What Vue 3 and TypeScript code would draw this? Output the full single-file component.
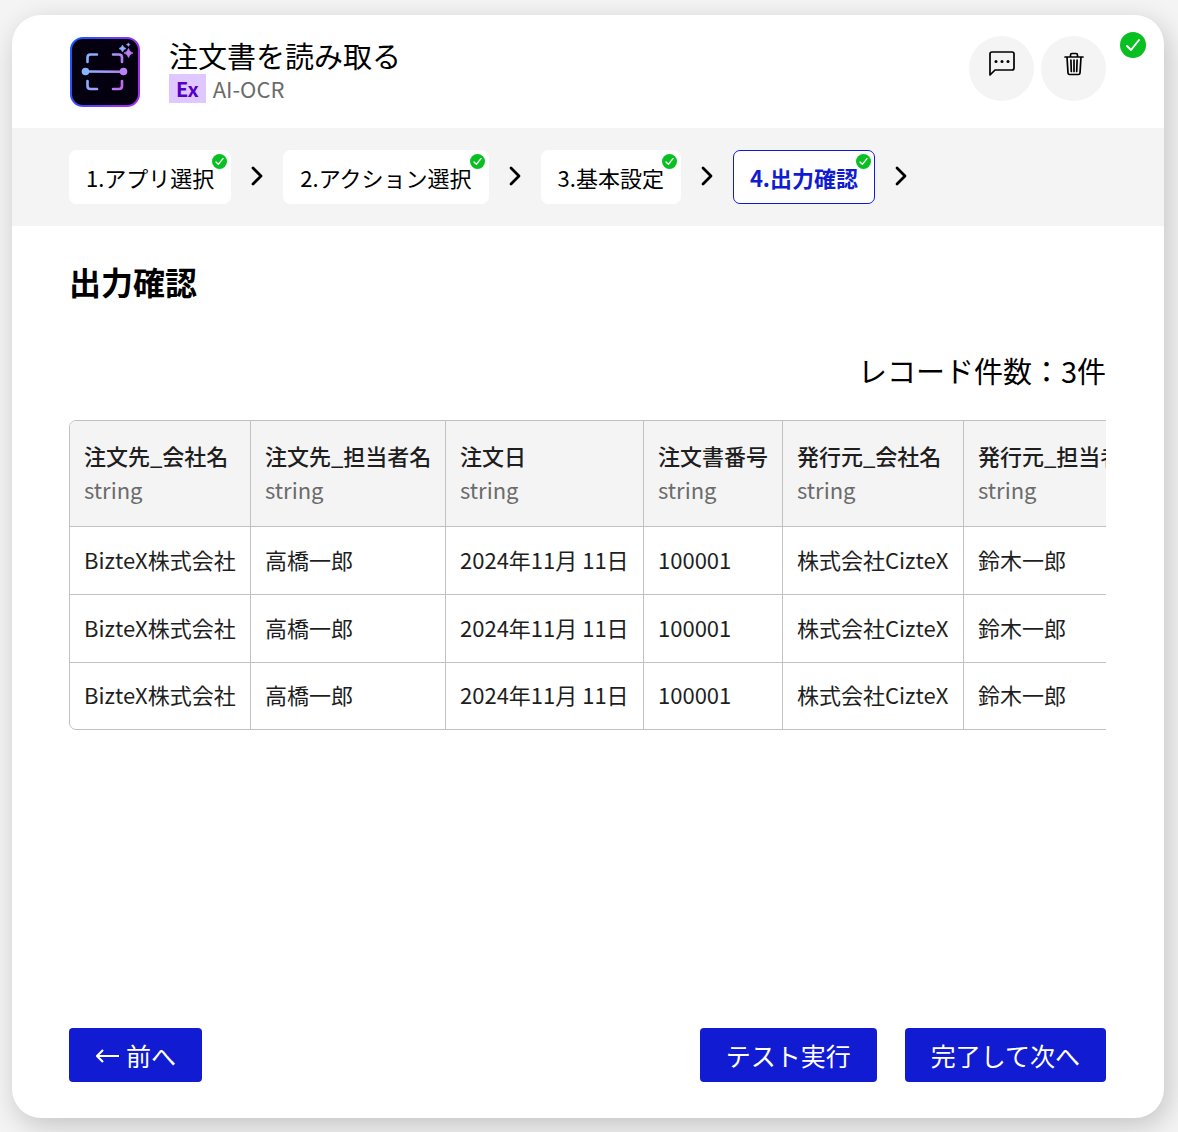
<script setup lang="ts">
interface Step {
  label: string
  current?: boolean
}

interface Column {
  key: keyof OrderRow
  label: string
  type: string
}

interface OrderRow {
  customer: string
  contact: string
  date: string
  number: string
  issuer: string
  issuerContact: string
}

const steps: Step[] = [
  { label: '1.アプリ選択' },
  { label: '2.アクション選択' },
  { label: '3.基本設定' },
  { label: '4.出力確認', current: true },
]

const columns: Column[] = [
  { key: 'customer', label: '注文先_会社名', type: 'string' },
  { key: 'contact', label: '注文先_担当者名', type: 'string' },
  { key: 'date', label: '注文日', type: 'string' },
  { key: 'number', label: '注文書番号', type: 'string' },
  { key: 'issuer', label: '発行元_会社名', type: 'string' },
  { key: 'issuerContact', label: '発行元_担当者名', type: 'string' },
]

const rows: OrderRow[] = Array.from({ length: 3 }, () => ({
  customer: 'BizteX株式会社',
  contact: '高橋一郎',
  date: '2024年11月 11日',
  number: '100001',
  issuer: '株式会社CizteX',
  issuerContact: '鈴木一郎',
}))
</script>

<template>
  <div class="page">
    <main class="card">
      <header class="header">
        <svg class="app-icon" viewBox="0 0 70 70" aria-hidden="true">
          <defs>
            <linearGradient id="frame" x1="0" y1="0" x2="1" y2="0.3">
              <stop offset="0" stop-color="#0a5cff" />
              <stop offset="1" stop-color="#a52cf2" />
            </linearGradient>
            <linearGradient id="scan" gradientUnits="userSpaceOnUse" x1="14" y1="30" x2="58" y2="42">
              <stop offset="0" stop-color="#86b2ff" />
              <stop offset="0.55" stop-color="#a59af8" />
              <stop offset="1" stop-color="#c95cf0" />
            </linearGradient>
          </defs>
          <rect x="1" y="1" width="68" height="68" rx="12" fill="#05000f" stroke="url(#frame)" stroke-width="2" />
          <g fill="none" stroke="url(#scan)" stroke-width="2.6" stroke-linecap="round" stroke-linejoin="round">
            <path d="M17.500 25v-4.500q0-3 3-3H27M43 17.500h6q3 0 3 3V25M17.500 44v5q0 3 3 3H27M43 52h6q3 0 3-3v-5" />
            <path d="M16 34.500L53 34.700" />
          </g>
          <circle cx="15.500" cy="34.500" r="3.800" fill="#8ab4ff" />
          <circle cx="53.500" cy="34.500" r="3.800" fill="#b982f6" />
          <path d="M52.500 8q.7 2.900 3.500 3.500-2.800.7-3.500 3.500-.7-2.800-3.500-3.500Q51.800 10.900 52.500 8z" fill="#8fb0ff" stroke="#8fb0ff" stroke-width=".6" />
          <path d="M58.500 11.500q.9 3.800 4.500 4.500-3.600.8-4.500 4.500-.9-3.700-4.500-4.500 3.600-.7 4.500-4.500z" fill="#bd7cf6" stroke="#bd7cf6" stroke-width=".8" />
          <path d="M58.300 5.800q.4 1.500 2 1.800-1.600.4-2 2-.4-1.600-2-2 1.600-.3 2-1.800z" fill="#a3a3fa" stroke="#a3a3fa" stroke-width=".4" />
        </svg>
        <div class="titles">
          <h1 class="title">注文書を読み取る</h1>
          <p class="app"><span class="badge">Ex</span>AI-OCR</p>
        </div>
        <div class="actions">
          <button class="round" type="button" aria-label="コメント">
            <svg width="26" height="26" viewBox="0 0 26 26" aria-hidden="true">
              <path d="M1 24V3q0-2 2-2h20q2 0 2 2v14q0 2-2 2H6z" fill="none" stroke="#000" stroke-width="1.700" stroke-linejoin="round" />
              <circle cx="7" cy="10.500" r="1.500" />
              <circle cx="13" cy="10.500" r="1.500" />
              <circle cx="19" cy="10.500" r="1.500" />
            </svg>
          </button>
          <button class="round" type="button" aria-label="削除">
            <svg width="20" height="26" viewBox="0 0 20 26" aria-hidden="true">
              <g fill="none" stroke="#000" stroke-width="1.700" stroke-linecap="round" stroke-linejoin="round">
                <path d="M1 6h18M3 6l1 16q.1 1.500 1.600 1.500h8.800q1.500 0 1.600-1.500L17 6M6.500 6V4q0-1.500 1.500-1.500h4q1.500 0 1.500 1.500v2" />
                <path d="M6.900 9l.4 11.500M10 9v11.500M13.100 9l-.4 11.500" />
              </g>
            </svg>
          </button>
          <svg class="done" viewBox="0 0 26 26" role="img" aria-label="完了">
            <circle cx="13" cy="13" r="13" fill="#08c021" />
            <path d="M7 14l4 4 8-10" fill="none" stroke="#fff" stroke-width="2" stroke-linecap="round" stroke-linejoin="round" />
          </svg>
        </div>
      </header>

      <nav class="steps" aria-label="設定ステップ">
        <template v-for="step in steps" :key="step.label">
          <button class="step" :class="{ current: step.current }" type="button" :aria-current="step.current ? 'step' : undefined">
            {{ step.label }}
            <svg class="step-done" viewBox="0 0 26 26" aria-hidden="true">
              <circle cx="13" cy="13" r="13" fill="#08c021" />
              <path d="M7 14l4 4 8-10" fill="none" stroke="#fff" stroke-width="2.400" stroke-linecap="round" stroke-linejoin="round" />
            </svg>
          </button>
          <svg class="chevron" viewBox="0 0 12 20" aria-hidden="true">
            <path d="M2 2l8 8-8 8" fill="none" stroke="#000" stroke-width="2.800" stroke-linecap="round" stroke-linejoin="round" />
          </svg>
        </template>
      </nav>

      <section class="content">
        <h2 class="heading">出力確認</h2>
        <p class="count">レコード件数：3件</p>
        <div class="table-box">
          <table class="table">
            <colgroup>
              <col v-for="column in columns" :key="column.key" :class="'col-' + column.key" />
            </colgroup>
            <thead>
              <tr>
                <th v-for="column in columns" :key="column.key" scope="col">
                  {{ column.label }}
                  <span class="type">{{ column.type }}</span>
                </th>
              </tr>
            </thead>
            <tbody>
              <tr v-for="(row, index) in rows" :key="index">
                <td v-for="column in columns" :key="column.key">{{ row[column.key] }}</td>
              </tr>
            </tbody>
          </table>
        </div>
      </section>

      <footer class="footer">
        <button class="primary" type="button">
          <svg class="arrow" viewBox="0 0 25 16" aria-hidden="true">
            <path d="M24 9H2M8 3L2 9l6 6" fill="none" stroke="#fff" stroke-width="2.200" stroke-linejoin="round" />
          </svg>
          前へ
        </button>
        <div class="footer-end">
          <button class="primary" type="button">テスト実行</button>
          <button class="primary" type="button">完了して次へ</button>
        </div>
      </footer>
    </main>
  </div>
</template>

<style>
body {
  background: #f4f4f4;
}
</style>

<style scoped>
.page {
  box-sizing: border-box;
  min-height: 100vh;
  padding: 15px 14px 14px 12px;
  display: flex;
  overflow: hidden;
  background: #f4f4f4;
  color: #000;
  font-family: "Noto Sans CJK JP", sans-serif;
  font-size: 22px;
  font-weight: 400;
}

.card {
  flex: 1;
  min-width: 0;
  display: flex;
  flex-direction: column;
  border-radius: 29px;
  background: #fff;
  box-shadow: 4px 8px 28px rgba(0, 0, 0, 0.2);
}

h1,
h2,
p {
  margin: 0;
}

button {
  padding: 0;
  border: 0;
  font: inherit;
  color: inherit;
  cursor: pointer;
}

.header {
  display: flex;
  align-items: flex-start;
  height: 113px;
  box-sizing: border-box;
  padding: 21px 18px 0 57px;
}

.app-icon {
  width: 70px;
  height: 70px;
  margin: 1px 0 0 1px;
  flex: none;
}

.titles {
  flex: 1;
  padding-left: 29px;
}

.title {
  font-size: 29px;
  line-height: 38px;
  font-weight: 400;
}

.app {
  display: flex;
  align-items: center;
  gap: 7px;
  line-height: 29px;
  color: #6b6b6b;
}

.badge {
  padding: 0 7px;
  background: #dfc8ff;
  color: #5600c4;
  font-size: 20px;
  font-weight: 700;
}

.actions {
  display: flex;
  align-items: flex-start;
  gap: 7px;
}

.round {
  width: 65px;
  height: 65px;
  display: flex;
  justify-content: center;
  padding-top: 15px;
  border-radius: 50%;
  background: #f4f4f4;
}

.done {
  width: 26px;
  height: 26px;
  margin: -4px 0 0 7px;
}

.steps {
  display: flex;
  align-items: center;
  gap: 20px;
  padding: 22px 57px;
  background: #f4f4f4;
}

.step {
  position: relative;
  box-sizing: border-box;
  height: 54px;
  padding: 0 16px;
  border: 1px solid #fff;
  border-radius: 7px;
  background: #fff;
  white-space: nowrap;
}

.step.current {
  border-color: #111bd1;
  color: #111bd1;
  font-weight: 700;
}

.step-done {
  position: absolute;
  top: 3px;
  right: 3px;
  width: 15px;
  height: 15px;
}

.chevron {
  width: 12px;
  height: 20px;
  margin-bottom: 3px;
}

.content {
  flex: 1;
  padding: 34px 58px 0 57px;
}

.heading {
  font-size: 32px;
  line-height: 42px;
  font-weight: 700;
}

.count {
  margin-top: 48px;
  font-size: 29px;
  line-height: 40px;
  text-align: right;
}

.table-box {
  margin-top: 30px;
  overflow: hidden;
}

.table {
  width: 1090px;
  table-layout: fixed;
  border: 1px solid #c1c1c1;
  border-radius: 7px;
  border-spacing: 0;
  overflow: hidden;
  color: #1e1e1e;
}

.col-customer,
.col-issuer {
  width: 181px;
}

.col-contact {
  width: 195px;
}

.col-date {
  width: 198px;
}

.col-number {
  width: 139px;
}

th,
td {
  padding: 16px 0 18px 14px;
  border-right: 1px solid #c1c1c1;
  border-bottom: 1px solid #c1c1c1;
  line-height: 33px;
  text-align: left;
  white-space: nowrap;
}

th {
  padding: 17px 0 20px 14px;
  background: #f4f4f4;
  line-height: 34px;
  font-weight: 500;
}

tbody tr:last-child td {
  padding: 15px 0 18px 14px;
  border-bottom: 0;
}

.type {
  display: block;
  color: #6b6b6b;
  font-weight: 400;
}

.footer {
  display: flex;
  justify-content: space-between;
  padding: 0 58px 36px 57px;
}

.footer-end {
  display: flex;
  gap: 28px;
}

.primary {
  display: flex;
  align-items: center;
  gap: 6px;
  height: 54px;
  padding: 0 26px;
  border-radius: 4px;
  background: #111bd1;
  color: #fff;
  font-size: 25px;
}

.arrow {
  width: 25px;
  height: 16px;
}
</style>
